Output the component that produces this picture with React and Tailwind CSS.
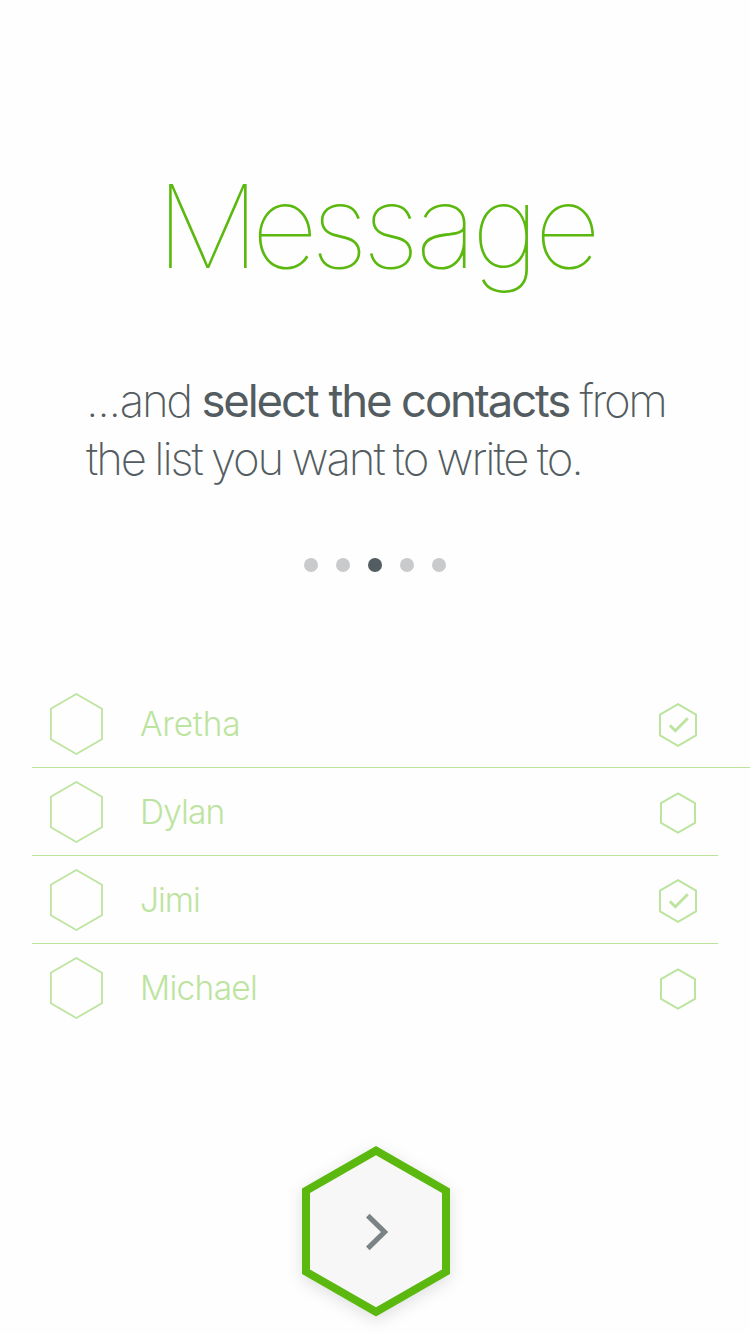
const contacts = [
  { name: 'Aretha', selected: true, line: 'w-[718px] border-b', tracking: 'tracking-[-0.2px]' },
  { name: 'Dylan', selected: false, line: 'w-[686px] border-b', tracking: 'tracking-[-0.9px]' },
  { name: 'Jimi', selected: true, line: 'w-[686px] border-b', tracking: 'tracking-[-1px]' },
  { name: 'Michael', selected: false, line: 'w-[686px] border-b border-b-transparent', tracking: 'tracking-[-0.7px]' },
];

function Avatar() {
  return (
    <svg className="ml-[17px] h-[64px] w-[55px] shrink-0" viewBox="0 0 55 64" fill="none" stroke="#bde49f" strokeWidth="1.8">
      <path d="M27.3 2L53 16.8V47.2L27.3 62L1.9 47.2V16.8Z" />
    </svg>
  );
}

function SelectMark({ selected }) {
  return (
    <svg className="h-[46px] w-[40px] shrink-0" viewBox="0 0 40 46" fill="none" stroke="#bde49f" strokeWidth="2">
      {selected ? (
        <>
          <path d="M20 2.2L38 12.6V33.4L20 43.8L2 33.4V12.6Z" />
          <path d="M11.8 23.2L17.3 28.7L29.8 16.2" strokeWidth="2.9" />
        </>
      ) : (
        <path d="M20 3.4L37 13.2V32.8L20 42.6L3 32.8V13.2Z" />
      )}
    </svg>
  );
}

export default function App() {
  return (
    <main className="flex h-[1334px] w-[750px] flex-col overflow-hidden bg-[#fefefe] font-['Inter',sans-serif] text-[#535c60]">
      <h1 className="mt-[155px] pl-[156px] text-[116px] leading-[142px] font-thin tracking-[-5.6px] whitespace-nowrap text-[#5ab80e]">
        <span className="tracking-[-8.2px]">M</span>
        <span className="tracking-[-7.2px]">e</span>
        <span className="tracking-[-5.8px]">s</span>
        <span className="tracking-[-3.7px]">s</span>
        <span className="tracking-[-5px]">a</span>
        <span className="tracking-[-4.5px]">ge</span>
      </h1>
      <p className="mt-[75px] h-[116px] pl-[86px] text-[45.5px] leading-[58px] font-extralight whitespace-nowrap">
        <span className="tracking-[-1.3px]">...</span>
        <span className="tracking-[-2.3px]">and </span>
        <span className="font-normal tracking-[-2.15px] [word-spacing:0.2px]">select the contacts</span>
        <span className="tracking-[-2.45px]"> from</span>
        <br />
        <span className="tracking-[-2.05px] [word-spacing:-1.5px]">the list you want to write to.</span>
      </p>
      <div className="mt-[70px] flex h-[14px] justify-center gap-[18px]">
        {[0, 1, 2, 3, 4].map((i) => (
          <span key={i} className={i === 2 ? 'size-[14px] rounded-full bg-[#535c60]' : 'size-[14px] rounded-full bg-[#c8cacb]'} />
        ))}
      </div>
      <ul className="mt-[108px] ml-[32px]">
        {contacts.map((c) => (
          <li key={c.name} className={`flex h-[88px] items-center border-[#bde49f] ${c.line}`}>
            <Avatar />
            <span className={`mt-px ml-[36px] w-[518px] shrink-0 text-[33.5px] leading-[44px] font-light text-[#bde49f] ${c.tracking}`}>{c.name}</span>
            <span className="mt-[2px] flex">
              <SelectMark selected={c.selected} />
            </span>
          </li>
        ))}
      </ul>
      <button className="mt-[91px] ml-[286px] h-[206px] w-[180px]" aria-label="Next">
        <svg className="h-[206px] w-[180px] drop-shadow-[0_4px_8px_rgba(0,0,0,0.12)]" viewBox="0 0 180 206">
          <path d="M90 23L164 65.5V151L90 193.5L16 151V65.5Z" fill="#5ab80e" />
          <path d="M90 32.3L156 70V146.5L90 184.2L24 146.5V70Z" fill="#f7f7f7" />
          <path d="M81.8 92.7L98.5 109L81.8 125.3" fill="none" stroke="#7a8487" strokeWidth="5.2" />
        </svg>
      </button>
    </main>
  );
}
